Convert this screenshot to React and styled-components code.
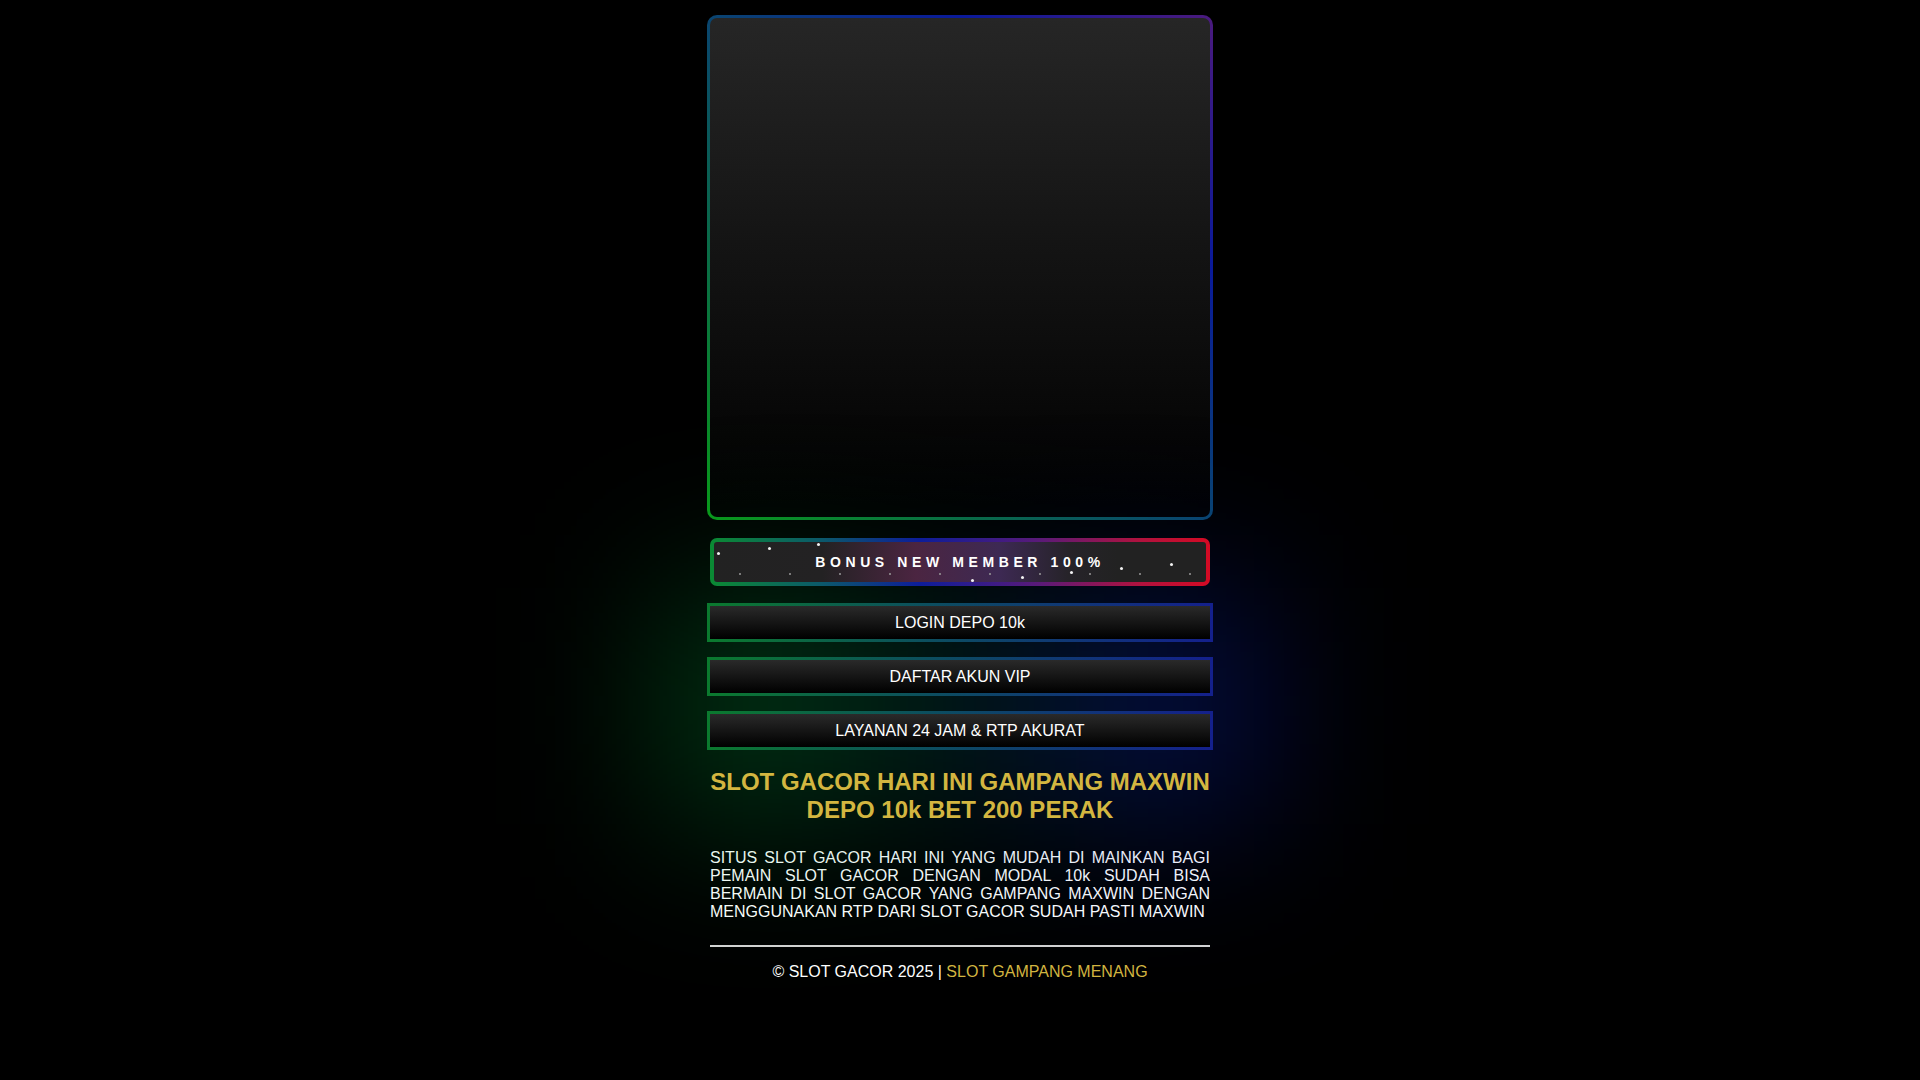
import React from "react";
import styled, { createGlobalStyle } from "styled-components";

const GlobalStyle = createGlobalStyle`
  html, body { margin: 0; padding: 0; background: #000; }
  body {
    font-family: "Liberation Sans", Arial, sans-serif;
    color: #fff;
  }
`;

const Page = styled.div`
  width: 506px;
  margin: 0 auto;
  padding: 15px 0 80px;
  display: flex;
  flex-direction: column;
`;

const Banner = styled.div`
  height: 499px;
  border: 3px solid transparent;
  border-radius: 10px;
  background:
    linear-gradient(180deg, #262626 0%, #141414 45%, #000 100%) padding-box,
    linear-gradient(45deg, #0a9a1a 0%, #0a1a9a 75%, #4b1a7d 100%) border-box;
`;

const GlowArea = styled.div`
  position: relative;
  isolation: isolate;
  display: flex;
  flex-direction: column;
  margin-top: 18px;

  &::before {
    content: "";
    position: absolute;
    left: -40px;
    right: -40px;
    top: 50px;
    bottom: 0;
    background: linear-gradient(
      90deg,
      rgba(0, 175, 55, 0.38) 0%,
      rgba(0, 90, 90, 0.22) 50%,
      rgba(10, 30, 230, 0.38) 100%
    );
    filter: blur(80px);
    z-index: -1;
  }
`;

const BonusBar = styled.div`
  position: relative;
  margin: 0 3px;
  height: 40px;
  border: 4px solid transparent;
  border-radius: 7px;
  overflow: hidden;
  display: flex;
  align-items: center;
  justify-content: center;
  background:
    linear-gradient(
        90deg,
        #222 0%,
        #232223 22%,
        #4b2541 41%,
        #3d2953 58%,
        #262329 72%,
        #222 82%,
        #222 100%
      )
      padding-box,
    linear-gradient(
        90deg,
        #0b8a33 0%,
        #0b5a6a 22%,
        #0d1d99 42%,
        #5a1a78 66%,
        #b0123e 86%,
        #d40a24 100%
      )
      border-box;
`;

const BonusText = styled.span`
  position: relative;
  z-index: 1;
  font-size: 14px;
  font-weight: bold;
  letter-spacing: 4.6px;
  color: #fff;
`;

const Star = styled.span`
  position: absolute;
  border-radius: 50%;
  width: ${(p) => (p.$bright ? 3 : 2)}px;
  height: ${(p) => (p.$bright ? 3 : 2)}px;
  background: ${(p) => (p.$bright ? "#f2f2f2" : "#9a9a9a")};
`;

const ButtonList = styled.div`
  display: flex;
  flex-direction: column;
  gap: 15px;
  margin-top: 17px;
`;

const ActionButton = styled.a`
  display: block;
  border: 3px solid transparent;
  padding: 7px 0;
  line-height: 19px;
  font-size: 16px;
  text-align: center;
  color: #fff;
  text-decoration: none;
  background:
    linear-gradient(180deg, #2a2a2a 0%, #000 100%) padding-box,
    linear-gradient(90deg, #0b7a2e 0%, #0c4d60 45%, #14208c 100%) border-box;
`;

const Heading = styled.h1`
  margin: 18px 3px 0;
  font-size: 24px;
  font-weight: bold;
  line-height: normal;
  text-align: center;
  color: #d3b640;
`;

const Body = styled.p`
  margin: 25px 3px 0;
  font-size: 16px;
  line-height: normal;
  text-align: justify;
  color: #fff;
`;

const Rule = styled.hr`
  margin: 24px 3px 0;
  border: 0;
  height: 2px;
  background: #d4d4d4;
`;

const Footer = styled.div`
  margin-top: 16px;
  font-size: 16px;
  line-height: normal;
  text-align: center;
  color: #fff;
`;

const Gold = styled.a`
  color: #d3b640;
  text-decoration: none;
`;

const stars = [
  [3, 10, true],
  [54, 5, true],
  [103, 1, true],
  [25, 31, false],
  [75, 31, false],
  [125, 31, false],
  [175, 31, false],
  [225, 31, false],
  [257, 37, true],
  [275, 31, false],
  [307, 34, true],
  [325, 31, false],
  [356, 29, true],
  [375, 31, false],
  [406, 25, true],
  [425, 31, false],
  [456, 21, true],
  [475, 31, false],
];

const buttons = ["LOGIN DEPO 10k", "DAFTAR AKUN VIP", "LAYANAN 24 JAM & RTP AKURAT"];

export default function App() {
  return (
    <>
      <GlobalStyle />
      <Page>
        <Banner />
        <GlowArea>
          <BonusBar>
            {stars.map(([x, y, bright], i) => (
              <Star key={i} $bright={bright} style={{ left: x, top: y }} />
            ))}
            <BonusText>BONUS NEW MEMBER 100%</BonusText>
          </BonusBar>
          <ButtonList>
            {buttons.map((b) => (
              <ActionButton key={b} href="#">
                {b}
              </ActionButton>
            ))}
          </ButtonList>
          <Heading>SLOT GACOR HARI INI GAMPANG MAXWIN DEPO 10k BET 200 PERAK</Heading>
        </GlowArea>
        <Body>
          SITUS SLOT GACOR HARI INI YANG MUDAH DI MAINKAN BAGI PEMAIN SLOT GACOR DENGAN MODAL 10k
          SUDAH BISA BERMAIN DI SLOT GACOR YANG GAMPANG MAXWIN DENGAN MENGGUNAKAN RTP DARI SLOT
          GACOR SUDAH PASTI MAXWIN
        </Body>
        <Rule />
        <Footer>
          © SLOT GACOR 2025 | <Gold href="#">SLOT GAMPANG MENANG</Gold>
        </Footer>
      </Page>
    </>
  );
}
